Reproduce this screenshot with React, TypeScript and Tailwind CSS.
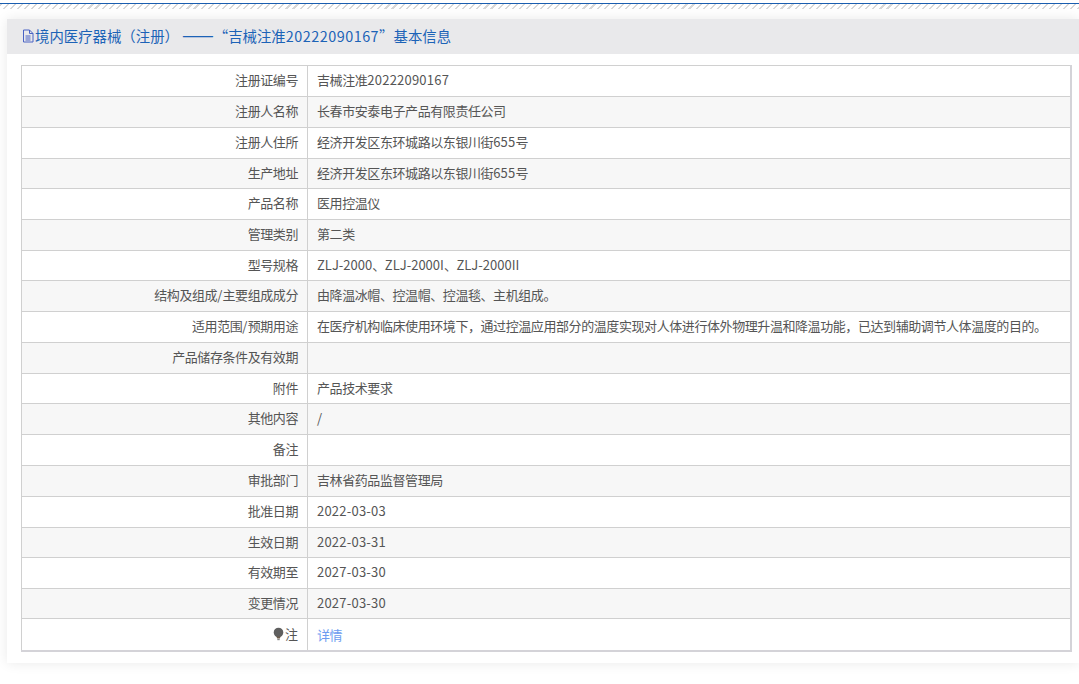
import React from "react";

const rows: [string, string, string][] = [
  ["注册证编号", "吉械注准20222090167", "h-[31px]"],
  ["注册人名称", "长春市安泰电子产品有限责任公司", "h-[31px]"],
  ["注册人住所", "经济开发区东环城路以东银川街655号", "h-[31px]"],
  ["生产地址", "经济开发区东环城路以东银川街655号", "h-[30px]"],
  ["产品名称", "医用控温仪", "h-[31px]"],
  ["管理类别", "第二类", "h-[31px]"],
  ["型号规格", "ZLJ-2000、ZLJ-2000I、ZLJ-2000II", "h-[30px]"],
  ["结构及组成/主要组成成分", "由降温冰帽、控温帽、控温毯、主机组成。", "h-[31px]"],
  ["适用范围/预期用途", "在医疗机构临床使用环境下，通过控温应用部分的温度实现对人体进行体外物理升温和降温功能，已达到辅助调节人体温度的目的。", "h-[31px]"],
  ["产品储存条件及有效期", "", "h-[31px]"],
  ["附件", "产品技术要求", "h-[30px]"],
  ["其他内容", "/", "h-[31px]"],
  ["备注", "", "h-[31px]"],
  ["审批部门", "吉林省药品监督管理局", "h-[31px]"],
  ["批准日期", "2022-03-03", "h-[31px]"],
  ["生效日期", "2022-03-31", "h-[30px]"],
  ["有效期至", "2027-03-30", "h-[31px]"],
  ["变更情况", "2027-03-30", "h-[30px]"],
];

function T({ s }: { s: string }) {
  return (
    <>
      {s.split(/([\x00-\x7f]+)/).map((part, i) =>
        part ? (
          <span
            key={i}
            className={i % 2 === 0 ? "tracking-[-0.42px]" : /[A-Z]/.test(part) ? "" : "tracking-[0.22px]"}
          >
            {part}
          </span>
        ) : null
      )}
    </>
  );
}

function Doc() {
  return (
    <svg width="12" height="14" viewBox="0 0 12 14" fill="none" stroke="#4a63c4" strokeWidth="1" className="shrink-0">
      <path d="M1.5 1h6l3.5 3.5V13H1.5z" />
      <path d="M7.5 1v3.5H11M3.5 7h5M3.5 9h5M3.5 11h5" />
    </svg>
  );
}

function Bulb() {
  return (
    <svg width="11" height="14" viewBox="0 0 11 14" className="mr-px inline-block align-[-2px]">
      <circle cx="5.5" cy="5.5" r="4.8" fill="#5f5f5f" />
      <path d="M3.5 9.5h4l-.6 2H4.1z" fill="#6b5a4a" />
      <rect x="4.3" y="12" width="2.4" height="1.2" fill="#888" />
    </svg>
  );
}

export default function App() {
  return (
    <div className="h-[684px] w-[1079px] overflow-hidden bg-white font-['Noto_Sans_CJK_SC','Liberation_Sans',sans-serif] text-[13px] text-[#555]">
      <div className="mt-[3px] h-px bg-[#1a5eb0]" />
      <div className="h-[5px] bg-[repeating-linear-gradient(135deg,#d8d8d8_0,#d8d8d8_1.5px,#ffffff_1.5px,#ffffff_5px)]" />
      <div className="mt-[10px] ml-[7px] h-[644px] bg-white shadow-[0_0_12px_rgba(0,0,0,0.09)]">
        <div className="flex h-[35px] items-center gap-px whitespace-nowrap bg-[#e9e9eb] pb-[2px] pl-[15px] text-[14.4px] text-[#1c63b7]">
          <Doc />
          <span>
            境内医疗器械（注册）
            <span className="ml-[3px] text-[19px] leading-none">——</span>
            “吉械注准<span className="tracking-[0.5px]">20222090167</span>”基本信息
          </span>
        </div>
        <div className="pt-[11px] pl-[14px]">
          <table className="w-[1051px] table-fixed border-collapse border-r-2 border-b-2 border-[#d4d3d8]">
            <colgroup>
              <col className="w-[286px]" />
              <col />
            </colgroup>
            <tbody>
              {rows.map(([k, v, h], i) => (
                <tr key={k} className={`${h} ${i % 2 ? "bg-[#f7f7f7]" : "bg-white"}`}>
                  <td className="border border-[#d0d0d0] pr-[9px] pb-[3px] text-right leading-none">
                    <T s={k} />
                  </td>
                  <td className="border border-[#d0d0d0] pl-[9px] pb-[3px] leading-none whitespace-nowrap">
                    <T s={v} />
                  </td>
                </tr>
              ))}
              <tr className="h-[32px] bg-white">
                <td className="border border-[#d0d0d0] pr-[9px] text-right leading-none">
                  <Bulb />注
                </td>
                <td className="border border-[#d0d0d0] pl-[9px] leading-none text-[#6c9cf0]">
                  <T s="详情" />
                </td>
              </tr>
            </tbody>
          </table>
        </div>
      </div>
    </div>
  );
}
